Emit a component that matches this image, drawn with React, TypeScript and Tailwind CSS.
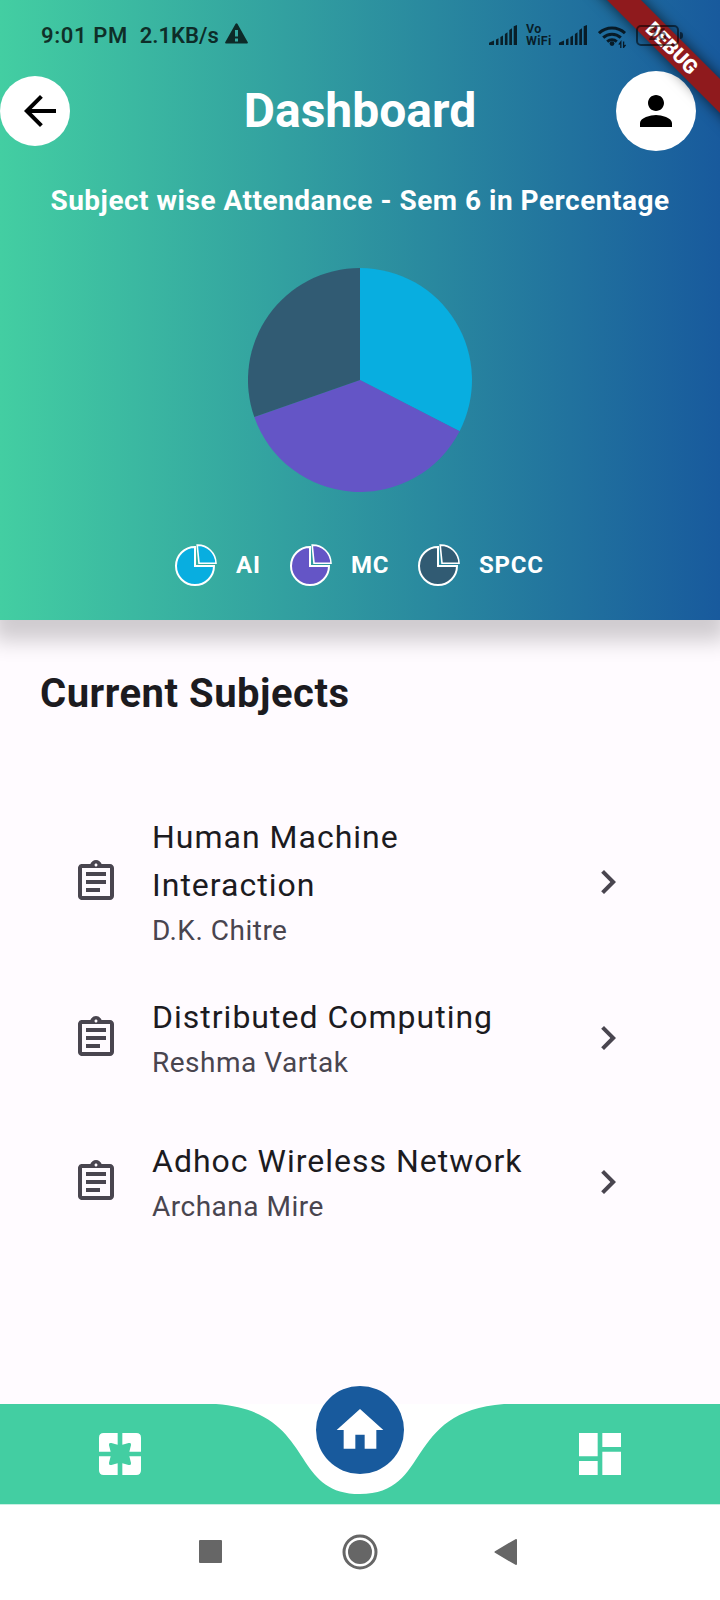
import React from 'react';
import {
  MdArrowBack,
  MdChevronRight,
  MdDashboard,
  MdHome,
  MdOutlineAssignment,
  MdPerson,
} from 'react-icons/md';

function Bars() {
  return (
    <svg className="h-5 w-7" viewBox="0 0 28 20" fill="currentColor">
      <path d="M0 20v-2.2L5 15.6V20zM7 14.6l2.5-1.3V20H7zM11.4 12l2.6-1.5V20h-2.6zM15.9 9l2.6-1.8V20h-2.6zM20.3 5l2.7-1.8V20h-2.7zM24.7 1.2L28 0v20h-3.3z" />
    </svg>
  );
}

function Warning() {
  return (
    <svg className="mt-[-3px] ml-[6px] h-[21px] w-[23px]" viewBox="0 0 23 21" fill="currentColor">
      <path
        fillRule="evenodd"
        d="M10.6.8Q11.5-.4 12.4.8L22.8 19.2Q23.2 20.6 22 20.6H1Q-.2 20.6.2 19.2zM10 7v6.6h3V7zM10 15.4v3h3v-3z"
      />
    </svg>
  );
}

function Wifi() {
  return (
    <svg className="h-[23px] w-[29px]" viewBox="0 0 29 23" fill="none" stroke="currentColor" strokeWidth="3">
      <path d="M1 8.2a19 19 0 0 1 26 0M5.2 12.6a13 13 0 0 1 17.6 0M9.2 16.6a7.4 7.4 0 0 1 9.6 0" />
      <circle cx="14" cy="18.6" r="2.4" fill="currentColor" stroke="none" />
      <path d="M22.8 23v-6l-2 2.6M25.6 16.4v6l2-2.6" strokeWidth="1.3" />
    </svg>
  );
}

function Battery() {
  return (
    <div className="flex items-center">
      <div className="flex h-[21px] w-[43px] items-center justify-center rounded-[5px] border-[2.5px] border-black/55 text-[16px] font-bold text-black/55">
        26
      </div>
      <div className="ml-px h-[7px] w-[3px] rounded-r-sm bg-black/55" />
    </div>
  );
}

function PagesIcon() {
  return (
    <svg className="size-14" viewBox="0 0 24 24" fill="currentColor">
      <path d="M3 5v6h5l-.7-2.7Q7 7 8.3 7.3L11 8V3H5Q3 3 3 5z" />
      <path d="M21 5v6h-5l.7-2.7Q17 7 15.7 7.3L13 8V3h6q2 0 2 2z" />
      <path d="M3 19v-6h5l-.7 2.7Q7 17 8.3 16.7L11 16v5H5q-2 0-2-2z" />
      <path d="M21 19v-6h-5l.7 2.7Q17 17 15.7 16.7L13 16v5h6q2 0 2-2z" />
    </svg>
  );
}

function LegendIcon({ color }: { color: string }) {
  return (
    <svg className="h-[42px] w-[42px] overflow-visible" viewBox="0 0 42 42" fill={color} stroke="#fff" strokeWidth="2">
      <path d="M20 3A19 19 0 1 0 39 22H20z" />
      <path d="M22.2 1.1A18.4 18.4 0 0 1 41 19.2H24z" strokeWidth="1.6" />
    </svg>
  );
}

function PieChart() {
  return (
    <svg className="size-56" viewBox="-112 -112 224 224">
      <path fill="#08aee0" d="M0 0V-112A112 112 0 0 1 99.6 51.2z" />
      <path fill="#6455c6" d="M0 0L99.6 51.2A112 112 0 0 1 -105.7 37.1z" />
      <path fill="#315b73" d="M0 0L-105.7 37.1A112 112 0 0 1 0 -112z" />
    </svg>
  );
}

const subjects = [
  { title: 'Human Machine Interaction', teacher: 'D.K. Chitre', height: 'h-[168px]' },
  { title: 'Distributed Computing', teacher: 'Reshma Vartak', height: 'h-36' },
  { title: 'Adhoc Wireless Network', teacher: 'Archana Mire', height: 'h-36' },
];

const legend = [
  { label: 'AI', color: '#08aee0', width: 'w-[115px]' },
  { label: 'MC', color: '#6455c6', width: 'w-32' },
  { label: 'SPCC', color: '#315b73', width: 'w-[127px]' },
];

function StatusBar() {
  return (
    <div className="absolute inset-x-0 top-0 z-20 flex h-[70px] items-center pr-[37px] pl-[41px] text-black/75">
      <span className="text-[22px] font-semibold tracking-[0.6px]">9:01 PM</span>
      <span className="ml-3 text-[22px] font-semibold">2.1KB/s</span>
      <Warning />
      <div className="ml-auto flex items-center">
        <Bars />
        <div className="ml-[9px] flex w-[26px] flex-col text-[12.5px] leading-3 font-bold tracking-[0.3px]">
          <span>Vo</span>
          <span>WiFi</span>
        </div>
        <div className="ml-[7px] flex">
          <Bars />
        </div>
        <div className="mr-[9px] ml-[11px] pt-[2px]">
          <Wifi />
        </div>
        <Battery />
      </div>
    </div>
  );
}

export default function App() {
  return (
    <div className="relative flex h-[1600px] w-[720px] flex-col overflow-hidden bg-[#fffbff] font-['Roboto',sans-serif]">
      <header className="flex h-[620px] shrink-0 flex-col bg-[linear-gradient(90deg,#43cea2,#185a9d)] pt-[70px] text-white shadow-[0_14px_20px_7px_rgba(0,0,0,0.19)]">
        <div className="flex h-[82px] items-center justify-between pr-6">
          <div className="flex w-20">
            <button className="flex size-[70px] items-center justify-center rounded-full bg-white pl-[10px] text-black">
              <MdArrowBack className="size-12 shrink-0" />
            </button>
          </div>
          <h1 className="pl-6 text-[48px] leading-none font-bold">Dashboard</h1>
          <button className="flex size-20 items-center justify-center rounded-full bg-white text-black">
            <MdPerson className="size-12" />
          </button>
        </div>
        <h2 className="mt-[29px] text-center text-[28px] leading-10 font-bold tracking-[0.5px]">
          Subject wise Attendance - Sem 6 in Percentage
        </h2>
        <div className="mt-[47px] flex justify-center">
          <PieChart />
        </div>
        <div className="mt-[52px] flex items-center pl-[175px]">
          {legend.map((l) => (
            <div key={l.label} className={`flex items-center gap-[19px] ${l.width}`}>
              <LegendIcon color={l.color} />
              <span className="text-2xl font-bold tracking-[0.8px]">{l.label}</span>
            </div>
          ))}
        </div>
      </header>

      <main className="flex-1 text-[#1c1b1f]">
        <h2 className="mt-[50px] pl-10 text-[40px] leading-[48px] font-bold tracking-[0.5px]">Current Subjects</h2>
        <ul className="mt-20 pr-[88px] pl-[72px]">
          {subjects.map((s) => (
            <li key={s.title} className={`flex items-center ${s.height}`}>
              <MdOutlineAssignment className="size-12 shrink-0 text-[#49454f]" />
              <div className="mr-8 ml-8 flex flex-1 flex-col gap-[2px]">
                <p className="text-[32px] leading-[48px] tracking-[1px]">{s.title}</p>
                <p className="text-[28px] leading-10 tracking-[0.5px] text-[#49454f]">{s.teacher}</p>
              </div>
              <MdChevronRight className="size-12 shrink-0 text-[#49454f]" />
            </li>
          ))}
        </ul>
      </main>

      <nav className="relative flex h-[100px] shrink-0 items-center bg-white text-white">
        <svg className="absolute inset-0 h-[100px] w-[720px]" viewBox="0 0 720 100">
          <path fill="#43cea2" d="M0 0H216C316.8 7.5 288 90 360 90S403.2 7.5 504 0H720V100H0z" />
        </svg>
        <div className="relative flex flex-1 justify-center">
          <PagesIcon />
        </div>
        <div className="relative flex flex-1 justify-center">
          <button className="mt-[-48px] flex size-[88px] items-center justify-center rounded-full bg-[#185a9d]">
            <MdHome className="size-14" />
          </button>
        </div>
        <div className="relative flex flex-1 justify-center">
          <MdDashboard className="size-14" />
        </div>
      </nav>

      <footer className="flex h-24 shrink-0 items-center border-t border-[#c7f0e3] bg-white pb-[2px] pl-[199px] text-[#666]">
        <div className="size-[23px] rounded-[1px] bg-[#666]" />
        <svg className="ml-[120px] size-9" viewBox="0 0 36 36" fill="currentColor">
          <circle cx="18" cy="18" r="16" fill="none" stroke="currentColor" strokeWidth="3" />
          <circle cx="18" cy="18" r="12" />
        </svg>
        <svg className="ml-[116px] h-[26px] w-[23px]" viewBox="0 0 23 26" fill="currentColor" stroke="currentColor" strokeWidth="2" strokeLinejoin="round">
          <path d="M1.5 13L22 1v24z" />
        </svg>
      </footer>

      <div className="absolute top-[36px] left-[522px] z-10 flex h-6 w-[300px] rotate-45 items-center justify-center bg-[#8f1a1d] text-[20px] leading-none font-black text-white shadow-[0_0_14px_rgba(0,0,0,0.65)]">
        DEBUG
      </div>
      <StatusBar />
    </div>
  );
}
